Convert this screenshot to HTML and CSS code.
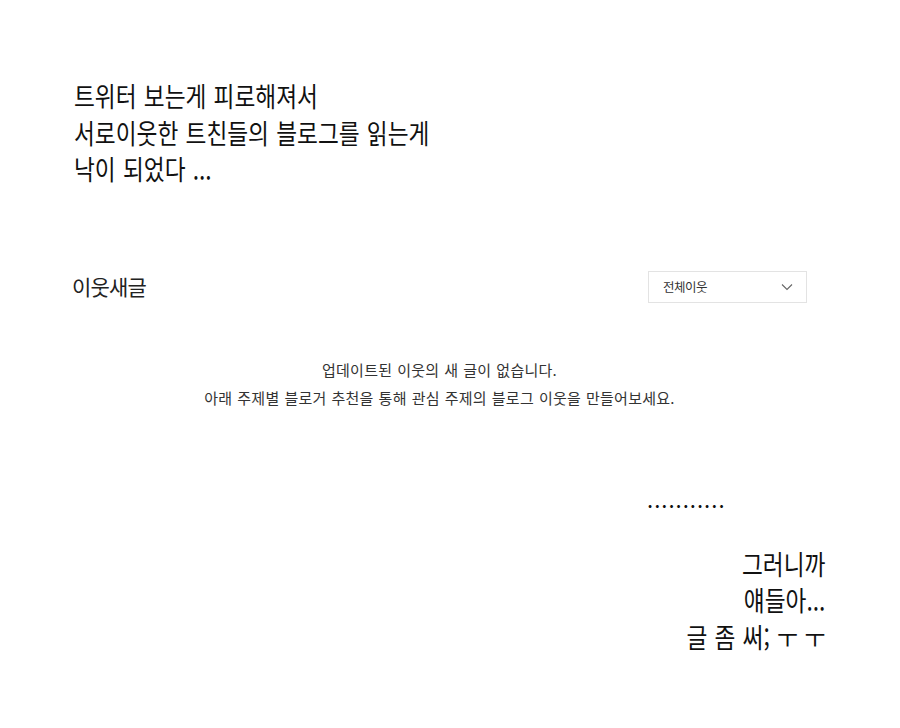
FILE: index.html
```html
<!DOCTYPE html>
<html lang="ko">
<head>
<meta charset="utf-8">
<link rel="stylesheet" href="styles.css">
</head>
<body>
<div class="page">
  <div class="intro">
    <p>트위터 보는게 피로해져서</p>
    <p>서로이웃한 트친들의 블로그를 읽는게</p>
    <p>낙이 되었다 ...</p>
  </div>
  <section class="feed">
    <div class="feed-head">
      <h2 class="feed-title">이웃새글</h2>
      <div class="select">
        <span>전체이웃</span>
        <svg class="chev" width="12" height="8" viewBox="0 0 12 8"><path d="M1 1.5 L6 6.5 L11 1.5" fill="none" stroke="#666" stroke-width="1.1"/></svg>
      </div>
    </div>
    <div class="empty">
      <p>업데이트된 이웃의 새 글이 없습니다.</p>
      <p>아래 주제별 블로거 추천을 통해 관심 주제의 블로그 이웃을 만들어보세요.</p>
    </div>
  </section>
  <div class="outro">
    <p class="dots">...........</p>
    <div class="plea">
      <p>그러니까</p>
      <p>얘들아...</p>
      <p>글 좀 써; <span class="gap">ㅜ</span>ㅜ</p>
    </div>
  </div>
</div>
</body>
</html>
```
FILE: styles.css
```css
html, body {
  margin: 0;
  padding: 0;
  background: #fff;
  color: #111;
  font-family: "Noto Sans CJK KR", "Noto Sans", sans-serif;
}
p { margin: 0; }
.page {
  width: 900px;
  height: 728px;
  overflow: hidden;
}
.intro {
  padding: 78px 0 0 74px;
  font-size: 27px;
  line-height: 36.5px;
  word-spacing: 1px;
  color: #111;
  transform: scaleX(0.84);
  transform-origin: 74px 0;
}
.feed {
  margin: 82px 93px 0 72px;
}
.feed-head {
  display: flex;
  justify-content: space-between;
  align-items: center;
}
.feed-title {
  margin: 0;
  font-size: 21px;
  font-weight: 400;
  letter-spacing: -0.8px;
  color: #222;
}
.select {
  border: 1px solid #e3e3e3;
  box-sizing: border-box;
  width: 159px;
  height: 32px;
  margin-top: 1px;
  display: flex;
  align-items: center;
  justify-content: space-between;
  padding: 0 13px 0 14px;
  font-size: 12.5px;
  letter-spacing: -0.5px;
  color: #333;
}
.chev { display: block; }
.empty {
  margin-top: 53px;
  text-align: center;
  font-size: 15px;
  line-height: 28px;
  letter-spacing: 0.25px;
  word-spacing: 0.5px;
  color: #333;
}
.outro {
  margin: 74px 75px 0 0;
  display: flex;
  flex-direction: column;
  align-items: flex-end;
}
.dots {
  align-self: flex-start;
  margin-left: 647px;
  font-size: 22px;
  line-height: 24px;
  letter-spacing: 1px;
}
.plea {
  margin-top: 36px;
  text-align: right;
  font-size: 27px;
  line-height: 36.5px;
  word-spacing: 1px;
  transform: scaleX(0.84);
  transform-origin: right top;
}
.gap { letter-spacing: 8px; }
```
